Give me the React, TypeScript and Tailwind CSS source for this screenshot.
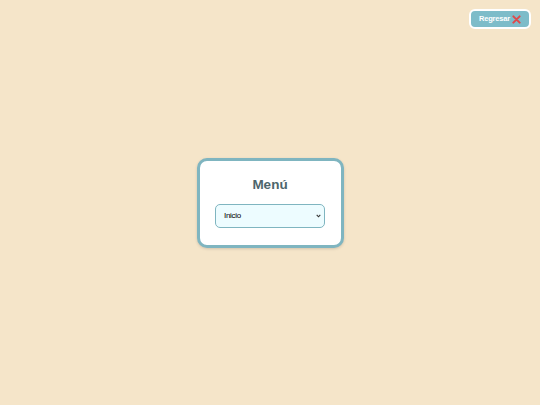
import React from "react";

export default function App() {
  return (
    <div className="relative flex h-[405px] w-full items-center justify-center bg-[#f5e5c9] font-['Liberation_Sans',Arial,sans-serif]">
      <button className="absolute right-[9px] top-[9px] flex h-[20px] w-[62px] items-center justify-center gap-[2px] rounded-[6px] border-2 border-white bg-[#7dbcc9] text-[7.5px] font-bold tracking-[-0.2px] text-white">
        <span>Regresar</span>
        <svg width="9" height="9" viewBox="0 0 10 10">
          <path d="M1.5 1.5 L8.5 8.5 M8.5 1.5 L1.5 8.5" stroke="#e0484a" strokeWidth="2.2" strokeLinecap="round" />
        </svg>
      </button>
      <div className="flex w-[147px] flex-col items-center rounded-[10px] border-[3px] border-[#7fb5c0] bg-white px-[15px] pb-[17px] pt-[14px] shadow-[0_1px_3px_rgba(0,0,0,0.15)]">
        <h1 className="text-[13.5px] font-bold leading-[20px] text-[#4d666c]">Menú</h1>
        <div className="relative mt-[9px] w-[110px]">
          <select className="block h-[24px] w-full appearance-none rounded-[5px] border-[1.5px] border-[#7fb5c0] bg-[#edfcff] pl-[8px] text-[8px] tracking-[-0.3px] text-black outline-none">
            <option>Inicio</option>
          </select>
          <svg className="pointer-events-none absolute right-[4px] top-[10px]" width="5" height="4" viewBox="0 0 5 4">
            <path d="M0.7 0.8 L2.5 2.8 L4.3 0.8" stroke="#333" strokeWidth="1.1" fill="none" />
          </svg>
        </div>
      </div>
    </div>
  );
}
